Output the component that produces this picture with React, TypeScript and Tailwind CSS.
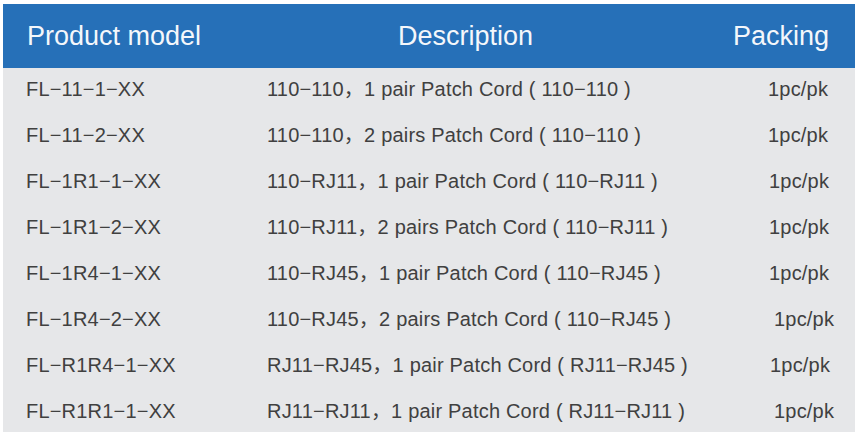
import React from "react";

const rows: { model: string; desc: string; pad: string }[] = [
  { model: "FL−11−1−XX", desc: "110−110，1 pair Patch Cord\u00a0(\u00a0110−110\u00a0)", pad: "pl-[0px]" },
  { model: "FL−11−2−XX", desc: "110−110，2 pairs Patch Cord\u00a0(\u00a0110−110\u00a0)", pad: "pl-[0px]" },
  { model: "FL−1R1−1−XX", desc: "110−RJ11，1 pair Patch Cord\u00a0(\u00a0110−RJ11\u00a0)", pad: "pl-[1px]" },
  { model: "FL−1R1−2−XX", desc: "110−RJ11，2 pairs Patch Cord\u00a0(\u00a0110−RJ11\u00a0)", pad: "pl-[1px]" },
  { model: "FL−1R4−1−XX", desc: "110−RJ45，1 pair Patch Cord\u00a0(\u00a0110−RJ45\u00a0)", pad: "pl-[1px]" },
  { model: "FL−1R4−2−XX", desc: "110−RJ45，2 pairs Patch Cord\u00a0(\u00a0110−RJ45\u00a0)", pad: "pl-[6px]" },
  { model: "FL−R1R4−1−XX", desc: "RJ11−RJ45，1 pair Patch Cord\u00a0(\u00a0RJ11−RJ45\u00a0)", pad: "pl-[2px]" },
  { model: "FL−R1R1−1−XX", desc: "RJ11−RJ11，1 pair Patch Cord\u00a0(\u00a0RJ11−RJ11\u00a0)", pad: "pl-[6px]" },
];

export default function App() {
  return (
    <div
      className="w-[859px] h-[436px] bg-white pt-[4px] pl-[3px] pr-[4px] pb-[4px]"
      style={{ fontFamily: '"Liberation Sans", Arial, "Noto Sans CJK SC", sans-serif' }}
    >
      <div className="flex flex-col h-full">
        <div className="flex items-center h-[64px] bg-[#2670b8] text-[#f4f7fb] text-[27px] leading-none">
          <span className="w-[395px] pl-[24px]">Product model</span>
          <span className="w-[335px]">Description</span>
          <span>Packing</span>
        </div>
        <div className="flex-1 flex flex-col bg-[#e6e7e9] text-[#404040] text-[20px] leading-none tracking-[0.2px]">
          {rows.map((r, i) => (
            <div
              key={r.model}
              className={i === rows.length - 1 ? "flex items-center h-[42px]" : "flex items-center h-[46px] pb-[4px]"}
            >
              <span className="w-[264px] pl-[23px]">{r.model}</span>
              <span className="w-[501px]">{r.desc}</span>
              <span className={r.pad}>1pc/pk</span>
            </div>
          ))}
        </div>
      </div>
    </div>
  );
}
